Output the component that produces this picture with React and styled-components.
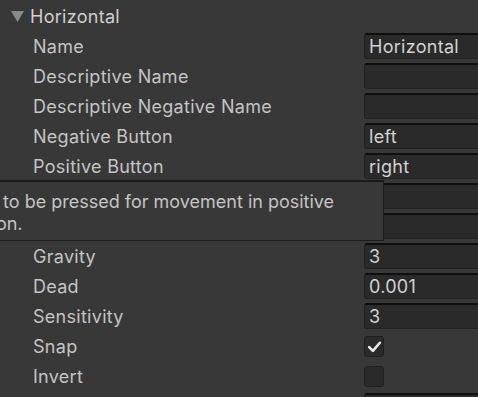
import React from "react";
import styled, { createGlobalStyle } from "styled-components";

const GlobalStyle = createGlobalStyle`
  html, body { margin: 0; padding: 0; background: #383838; }
  body { font-family: Inter, "Noto Sans", "Liberation Sans", sans-serif; }
`;

const Panel = styled.div`
  position: relative;
  width: 478px;
  height: 397px;
  overflow: hidden;
  background: #383838;
  padding-top: 1px;
  box-sizing: border-box;
  color: #c4c4c4;
  font-size: 18px;
  letter-spacing: 0.28px;
`;

const Header = styled.div`
  display: flex;
  align-items: center;
  height: 30px;
  padding-left: 11px;
`;

const Title = styled.span`
  margin-left: 6px;
  color: #cfcfcf;
`;

const Row = styled.div`
  display: flex;
  align-items: center;
  height: 30px;
`;

const Label = styled.div`
  width: 364px;
  flex: none;
  box-sizing: border-box;
  padding-left: 33px;
  white-space: nowrap;
`;

const Field = styled.div`
  flex: none;
  width: 130px;
  height: 26px;
  box-sizing: border-box;
  background: #2a2a2a;
  border: 1px solid #212121;
  border-top: 2px solid #0f0f0f;
  border-radius: 3px;
  padding-left: 4px;
  display: flex;
  align-items: center;
  color: #d2d2d2;
  white-space: nowrap;
`;

const Check = styled.div`
  flex: none;
  width: 20px;
  height: 21px;
  box-sizing: border-box;
  background: #2a2a2a;
  border: 1px solid #202020;
  border-radius: 3px;
  display: flex;
  align-items: center;
  justify-content: center;
`;

const Tooltip = styled.div`
  position: absolute;
  left: -64px;
  top: 180px;
  width: 448px;
  height: 61px;
  box-sizing: border-box;
  background: #383838;
  border: 1px solid #1c1c1c;
  border-top: 2px solid #1a1a1a;
  padding: 9px 0 0 6px;
  line-height: 22px;
  letter-spacing: 0;
  color: #c4c4c4;
  white-space: nowrap;
`;

const rows = [
  { label: "Name", value: "Horizontal" },
  { label: "Descriptive Name", value: "" },
  { label: "Descriptive Negative Name", value: "" },
  { label: "Negative Button", value: "left" },
  { label: "Positive Button", value: "right" },
  { label: "Alt Negative Button", value: "" },
  { label: "Alt Positive Button", value: "" },
  { label: "Gravity", value: "3" },
  { label: "Dead", value: "0.001" },
  { label: "Sensitivity", value: "3" },
  { label: "Snap", check: true, checked: true },
  { label: "Invert", check: true, checked: false },
  { label: "Type", value: "Key or Mouse Button" },
];

export default function App() {
  return (
    <>
      <GlobalStyle />
      <Panel>
        <Header>
          <svg width="13" height="12" viewBox="0 0 13 12">
            <path d="M0 1 L13 1 L6.5 12 Z" fill="#8a8a8a" />
          </svg>
          <Title>Horizontal</Title>
        </Header>
        {rows.map((r) => (
          <Row key={r.label}>
            <Label>{r.label}</Label>
            {r.check ? (
              <Check>
                {r.checked && (
                  <svg width="15" height="15" viewBox="0 0 14 14">
                    <path
                      d="M2 7.5 L5.5 11 L12 3.5"
                      stroke="#e8e8e8"
                      strokeWidth="2.4"
                      fill="none"
                      strokeLinecap="round"
                      strokeLinejoin="round"
                    />
                  </svg>
                )}
              </Check>
            ) : (
              <Field>{r.value}</Field>
            )}
          </Row>
        ))}
        <Tooltip>
          Button to be pressed for movement in positive
          <br />
          direction.
        </Tooltip>
      </Panel>
    </>
  );
}
